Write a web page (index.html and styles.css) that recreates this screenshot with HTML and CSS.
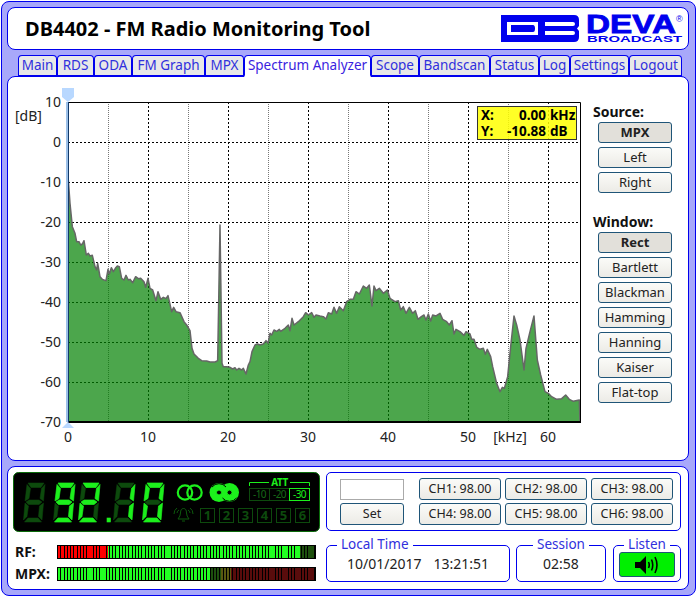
FILE: index.html
```html
<!DOCTYPE html>
<html lang="en">
<head>
    <meta charset="UTF-8">
    <meta name="viewport" content="width=device-width, initial-scale=1.0">
    <title>DB4402 - FM Radio Monitoring Tool</title>
    <link rel="stylesheet" href="styles.css">
</head>
<body>
    <div class="frame">
        <div class="head">
            <h1>DB4402 - FM Radio Monitoring Tool</h1>
            <svg class="logo" width="184" height="41" viewBox="500 8 184 41">
                <path fill="#0000ee" fill-rule="evenodd" d="M501 15H574Q579 15 579 20V26L577 28.5L579 31V37Q579 42 574 42H501ZM507 22V35H538V22ZM511 25H533Q535 25 535 28.5Q535 32 533 32H511ZM545 22V26H573Q575 26 575 24Q575 22 573 22ZM545 31V35H573Q575 35 575 33Q575 31 573 31Z"/>
                <text class="logo-name" x="586" y="33" textLength="90" lengthAdjust="spacingAndGlyphs">DEVA</text>
                <text class="logo-reg" x="676" y="22">®</text>
                <text class="logo-sub" x="587" y="42" textLength="95" lengthAdjust="spacingAndGlyphs">BROADCAST</text>
            </svg>
        </div>

        <div class="tabs">
            <a href="#main">Main</a>
            <a href="#rds">RDS</a>
            <a href="#oda">ODA</a>
            <a href="#graph">FM Graph</a>
            <a href="#mpx">MPX</a>
            <a href="#spectrum" class="active">Spectrum Analyzer</a>
            <a href="#scope">Scope</a>
            <a href="#bandscan">Bandscan</a>
            <a href="#status">Status</a>
            <a href="#log">Log</a>
            <a href="#settings">Settings</a>
            <a href="#logout">Logout</a>
        </div>

        <div class="panel">
            <svg class="chart" width="575" height="360" viewBox="10 88 575 360">
                <path class="grid-minor" d="M108.5 102V422M188.5 102V422M268.5 102V422M348.5 102V422M428.5 102V422M508.5 102V422"/>
                <path class="grid-major" d="M148.5 102V422M228.5 102V422M308.5 102V422M388.5 102V422M468.5 102V422M548.5 102V422M68 142.5H580M68 182.5H580M68 222.5H580M68 262.5H580M68 302.5H580M68 342.5H580M68 382.5H580"/>
                <g transform="translate(40 170) scale(.33333)">
                    <polygon class="trace" points="84,756 85,30 90,100 97,170 105,190 110,215 117,215 122,225 127,222 132,212 139,255 145,250 150,258 157,256 165,290 170,300 173,280 180,320 187,328 198,332 204,298 208,312 214,293 220,305 226,295 232,288 238,290 245,325 252,330 258,316 265,330 270,328 278,338 287,320 295,326 302,325 312,335 317,352 324,325 330,355 338,360 348,392 354,365 362,388 370,382 378,386 384,377 395,425 401,412 408,425 420,428 432,455 440,465 450,482 456,535 462,552 475,565 485,572 500,573 510,576 525,576 533,572 540,165 546,580 550,590 555,590 560,590 570,592 578,597 585,593 590,600 597,595 605,600 610,595 618,612 625,585 630,575 636,545 645,525 652,522 660,525 670,522 678,512 684,520 690,490 695,495 702,480 710,484 718,478 722,484 735,475 745,465 750,482 756,445 762,465 775,455 790,440 797,428 805,435 815,428 822,442 828,435 840,438 850,440 858,447 865,428 875,432 882,412 890,430 898,410 910,422 920,395 930,388 940,388 948,365 958,372 970,348 980,355 988,345 996,408 1002,348 1008,362 1018,355 1030,370 1042,360 1050,385 1065,395 1075,392 1082,420 1090,410 1098,430 1108,412 1118,430 1126,422 1134,448 1144,440 1152,435 1158,450 1165,432 1172,453 1178,435 1188,438 1200,430 1208,448 1220,455 1228,465 1236,452 1242,492 1248,478 1260,485 1272,496 1278,485 1290,492 1295,508 1302,508 1310,532 1320,538 1330,535 1336,553 1342,538 1352,560 1358,590 1370,640 1380,665 1387,652 1393,655 1403,620 1412,530 1422,438 1430,465 1440,510 1452,600 1458,535 1470,485 1482,438 1492,570 1502,615 1515,665 1525,670 1535,680 1550,688 1565,686 1577,675 1588,688 1600,694 1618,690 1620,756"/>
                </g>
                <path class="plot-box" d="M68 102.5H580.5V422"/>
                <path class="plot-floor" d="M68 422H581"/>
                <path class="cursor-band" d="M67 102V422"/>
                <path class="cursor-line" d="M68.5 102V422"/>
                <polygon class="cursor-grip" points="62,88 74,88 74,97 68,102 62,97"/>
                <polygon class="cursor-grip" points="68,422 74,428 62,428"/>

                <g class="y-labels">
                    <text x="61" y="107">10</text>
                    <text x="61" y="147">0</text>
                    <text x="61" y="187">-10</text>
                    <text x="61" y="227">-20</text>
                    <text x="61" y="267">-30</text>
                    <text x="61" y="307">-40</text>
                    <text x="61" y="347">-50</text>
                    <text x="61" y="387">-60</text>
                    <text x="61" y="427">-70</text>
                </g>
                <text class="axis-label" x="15" y="121">[dB]</text>
                <g class="x-labels">
                    <text x="68" y="442">0</text>
                    <text x="148" y="442">10</text>
                    <text x="228" y="442">20</text>
                    <text x="308" y="442">30</text>
                    <text x="388" y="442">40</text>
                    <text x="468" y="442">50</text>
                    <text x="510" y="442">[kHz]</text>
                    <text x="548" y="442">60</text>
                </g>
            </svg>

            <div class="readout">
                <span>X:</span><span class="num">0.00</span><span>kHz</span>
                <span>Y:</span><span class="num">-10.88</span><span>dB</span>
            </div>

            <div class="side">
                <div class="side-title">Source:</div>
                <button class="btn side-btn active">MPX</button>
                <button class="btn side-btn">Left</button>
                <button class="btn side-btn">Right</button>
                <div class="side-title second">Window:</div>
                <button class="btn side-btn active">Rect</button>
                <button class="btn side-btn">Bartlett</button>
                <button class="btn side-btn">Blackman</button>
                <button class="btn side-btn">Hamming</button>
                <button class="btn side-btn">Hanning</button>
                <button class="btn side-btn">Kaiser</button>
                <button class="btn side-btn">Flat-top</button>
            </div>
        </div>

        <div class="status">
            <div class="status-left">
                <svg class="display" width="307" height="60" viewBox="0 0 307 60" role="img" aria-label="92.10 MHz">
                    <defs>
                        <polygon id="sa" points="5,0 21,0 18,4.5 8,4.5"/>
                        <polygon id="sb" points="22,1.5 20.5,18 17,15.5 18.5,5.5"/>
                        <polygon id="sc" points="20.5,20 19,37 15.5,33.5 16.5,23"/>
                        <polygon id="sd" points="1.5,39 5,35 15,35 18.5,39"/>
                        <polygon id="se" points="2,20 5.5,23 4,33.5 .5,37"/>
                        <polygon id="sf" points="4,1.5 7.5,5.5 6,15.5 2,18"/>
                        <polygon id="sg" points="3,19 6,17 16,17 19,19 16,21.5 5.5,21.5"/>
                        <g id="eight">
                            <use href="#sa"/><use href="#sb"/><use href="#sc"/><use href="#sd"/><use href="#se"/><use href="#sf"/><use href="#sg"/>
                        </g>
                    </defs>
                    <rect class="display-bg" x=".5" y=".5" width="306" height="59" rx="5"/>

                    <g class="lcd-dim">
                        <use href="#eight" x="10" y="11"/>
                        <use href="#eight" x="40" y="11"/>
                        <use href="#eight" x="65" y="11"/>
                        <use href="#eight" x="100" y="11"/>
                        <use href="#eight" x="129" y="11"/>
                    </g>
                    <g class="lcd-on">
                        <g transform="translate(40 11)"><use href="#sa"/><use href="#sb"/><use href="#sc"/><use href="#sd"/><use href="#sf"/><use href="#sg"/></g>
                        <g transform="translate(65 11)"><use href="#sa"/><use href="#sb"/><use href="#sd"/><use href="#se"/><use href="#sg"/></g>
                        <rect x="94" y="46" width="3.5" height="4"/>
                        <g transform="translate(100 11)"><use href="#sb"/><use href="#sc"/></g>
                        <g transform="translate(129 11)"><use href="#sa"/><use href="#sb"/><use href="#sc"/><use href="#sd"/><use href="#se"/><use href="#sf"/></g>
                    </g>

                    <g class="ring-on">
                        <circle cx="172" cy="20.5" r="7.2"/>
                        <circle cx="181.5" cy="20.5" r="7.2"/>
                    </g>
                    <g class="swirl">
                        <circle class="swirl-fill" cx="206" cy="20.5" r="9.5"/>
                        <circle class="swirl-fill" cx="216.5" cy="20.5" r="9.5"/>
                        <path class="swirl-cut" d="M199 15A9 9 0 0 1 213 15M223.500 26A9 9 0 0 1 209.500 26"/>
                        <circle class="swirl-eye" cx="206" cy="20.5" r="2.5"/>
                        <circle class="swirl-eye" cx="216.5" cy="20.5" r="2.5"/>
                    </g>

                    <path class="att-line" d="M236.5 14V10.5H256M277 10.5H296.5V14"/>
                    <text class="att-title" x="266.5" y="14">ATT</text>
                    <g class="lcd-box">
                        <rect x="236.5" y="16.5" width="20" height="12"/>
                        <rect x="256.5" y="16.5" width="20" height="12"/>
                    </g>
                    <rect class="att-on" x="276.5" y="16.5" width="20" height="12"/>
                    <text class="att-text" x="246.5" y="26">-10</text>
                    <text class="att-text" x="266.5" y="26">-20</text>
                    <text class="att-text on" x="286.5" y="26">-30</text>

                    <g class="bell">
                        <path d="M165 47Q167.500 44 167.500 41Q167.500 36.500 170.500 36.500Q173.500 36.500 173.500 41Q173.500 44 176 47Z"/>
                        <path d="M169 49H172M164 41Q164 39 166 38M177 41Q177 39 175 38M161 42Q161 38 164 36M180 42Q180 38 177 36"/>
                    </g>
                    <g class="lcd-box">
                        <rect x="187.5" y="36.500" width="14" height="14"/>
                        <rect x="206.5" y="36.500" width="14" height="14"/>
                        <rect x="225.500" y="36.500" width="14" height="14"/>
                        <rect x="244.500" y="36.500" width="14" height="14"/>
                        <rect x="263.500" y="36.500" width="14" height="14"/>
                        <rect x="282.500" y="36.500" width="14" height="14"/>
                    </g>
                    <g class="preset-num">
                        <text x="194.5" y="48">1</text>
                        <text x="213.5" y="48">2</text>
                        <text x="232.5" y="48">3</text>
                        <text x="251.5" y="48">4</text>
                        <text x="270.5" y="48">5</text>
                        <text x="289.5" y="48">6</text>
                    </g>
                </svg>

                <div class="meter-row rf">
                    <span class="meter-label">RF:</span>
                    <div class="meter">
                        <span class="bar red" style="width: 50px"></span>
                        <span class="bar green" style="width: 192px"></span>
                        <span class="bar dim" style="width: 15px"></span>
                    </div>
                </div>
                <div class="meter-row">
                    <span class="meter-label">MPX:</span>
                    <div class="meter">
                        <span class="bar green" style="width: 152px"></span>
                        <span class="bar dim" style="width: 11px"></span>
                        <span class="bar olive" style="width: 10px"></span>
                        <span class="bar dark-red" style="width: 84px"></span>
                    </div>
                </div>
            </div>

            <div class="status-right">
                <div class="tuner">
                    <div class="tuner-set">
                        <input class="freq-input" type="text">
                        <button class="btn">Set</button>
                    </div>
                    <div class="presets">
                        <button class="btn">CH1: 98.00</button>
                        <button class="btn">CH2: 98.00</button>
                        <button class="btn">CH3: 98.00</button>
                        <button class="btn">CH4: 98.00</button>
                        <button class="btn">CH5: 98.00</button>
                        <button class="btn">CH6: 98.00</button>
                    </div>
                </div>
                <div class="info-row">
                    <fieldset class="local-time">
                        <legend>Local Time</legend>
                        <span>10/01/2017</span><span>13:21:51</span>
                    </fieldset>
                    <fieldset class="session">
                        <legend>Session</legend>
                        02:58
                    </fieldset>
                    <fieldset class="listen">
                        <legend>Listen</legend>
                        <button class="listen-btn" aria-label="Listen">
                            <svg width="24" height="18" viewBox="0 0 24 18">
                                <polygon class="spk-cone" points="0,6 5,6 11,0 11,18 5,12 0,12"/>
                                <path class="spk-wave" d="M13.500 6Q15 9 13.500 12M16.500 3.500Q19 9 16.500 14.500M20 1Q24 9 20 17"/>
                            </svg>
                        </button>
                    </fieldset>
                </div>
            </div>
        </div>
    </div>
</body>
</html>
```

FILE: styles.css
```css
body {
    margin: 0;
    background-color: #fff;
    font-family: "Noto Sans", Tahoma, sans-serif;
    font-size: 14px;
    color: #222;
}

.frame {
    width: 695px;
    height: 595px;
    margin: 1px 0 0 1px;
    padding: 5px 6px 5px 5px;
    box-sizing: border-box;
    background-color: #a8a8fa;
    border: 1px solid #0000ee;
    border-radius: 8px;
}

.head {
    height: 43px;
    box-sizing: border-box;
    display: flex;
    align-items: center;
    justify-content: space-between;
    padding: 0 4px 0 17px;
    background-color: #fff;
    border: 1px solid #0000ee;
    border-radius: 8px;
}

h1 {
    margin: 0;
    font-size: 20px;
    font-weight: bold;
    color: #000;
}

.logo {
    display: block;
}

.logo-name {
    font-family: "Liberation Sans", Arial, sans-serif;
    font-size: 25px;
    font-weight: bold;
    fill: #0000ee;
    stroke: #0000ee;
    stroke-width: .8px;
}

.logo-sub {
    font-family: "Liberation Sans", Arial, sans-serif;
    font-size: 9.5px;
    font-weight: bold;
    fill: #0000ee;
}

.logo-reg {
    font-family: "Liberation Sans", Arial, sans-serif;
    font-size: 9px;
    fill: #0000ee;
}

.tabs {
    display: grid;
    grid-template-columns: 39px 37px 38px 73px 39px 127px 48px 71px 49px 31px 59px 53px;
    height: 22px;
    margin: 5px 0 -1px 11px;
    position: relative;
    z-index: 1;
}

.tabs a {
    box-sizing: border-box;
    background-color: #e8e8e8;
    border: 1px solid #0000ee;
    border-bottom-width: 2px;
    border-radius: 4px 4px 0 0;
    text-align: center;
    text-decoration: none;
    font-size: 13.5px;
    line-height: 18px;
    color: #3030dd;
}

.tabs a.active {
    background-color: #fff;
    border-bottom-color: #fff;
    color: #3a1ee0;
}

.panel {
    height: 385px;
    box-sizing: border-box;
    display: flex;
    position: relative;
    background-color: #fff;
    border: 1px solid #0000ee;
    border-radius: 8px;
}

.chart {
    margin: 11px 0 0 2px;
    flex: none;
}

.chart text {
    font-family: "Noto Sans", Tahoma, sans-serif;
    font-size: 14px;
    fill: #222;
}

.grid-minor {
    stroke: #777;
    stroke-dasharray: 1 1;
    fill: none;
}

.grid-major {
    stroke: #000;
    stroke-dasharray: 2 2;
    fill: none;
}

.trace {
    fill: rgba(0, 128, 0, .7);
    stroke: #666;
    stroke-width: 4.5px;
    stroke-linejoin: round;
}

.plot-box {
    stroke: #000;
    fill: none;
}

.plot-floor {
    stroke: #000;
    stroke-width: 2px;
}

.cursor-band {
    stroke: #9cc0e8;
    stroke-width: 2px;
}

.cursor-line {
    stroke: #123a6a;
}

.cursor-grip {
    fill: #b8d8ff;
}

.y-labels text {
    text-anchor: end;
}

.x-labels text {
    text-anchor: middle;
}

.readout {
    position: absolute;
    left: 469px;
    top: 29px;
    width: 100px;
    height: 34px;
    box-sizing: border-box;
    display: grid;
    grid-template-columns: 16px 45px auto;
    column-gap: 4px;
    align-content: center;
    padding-left: 3px;
    background-color: rgba(255, 255, 0, .85);
    border: 1px solid #333;
    font-size: 13.5px;
    font-weight: bold;
    line-height: 16px;
    color: #000;
}

.readout .num {
    text-align: right;
}

.side {
    display: flex;
    flex-direction: column;
    gap: 4px;
    margin: 27px 0 0 8px;
}

.side-title {
    height: 14px;
    line-height: 16px;
    font-weight: bold;
    color: #111;
}

.side-title.second {
    margin-top: 17px;
}

.btn {
    padding: 0 0 2px;
    font-family: "Noto Sans", Tahoma, sans-serif;
    font-size: 12.5px;
    color: #222;
    background: linear-gradient(#fbfbf8, #ecebe6);
    border: 1px solid #1f5578;
    border-radius: 3px;
    cursor: pointer;
}

.side-btn {
    width: 74px;
    height: 21px;
    margin-left: 5px;
    font-size: 13px;
    line-height: 16px;
}

.side-btn.active {
    background: #e2e0da;
    font-weight: bold;
}

.status {
    height: 124px;
    box-sizing: border-box;
    margin-top: 5px;
    padding: 5px;
    display: flex;
    gap: 6px;
    background-color: #fff;
    border: 1px solid #0000ee;
    border-radius: 8px;
}

.status-left {
    width: 307px;
}

.display {
    display: block;
}

.display-bg {
    fill: #000;
    stroke: #0a6b0a;
}

.lcd-dim {
    fill: #0d4a0d;
    stroke: #0d4a0d;
    stroke-width: .5px;
}

.lcd-on {
    fill: #1cf01c;
    stroke: #1cf01c;
    stroke-width: .6px;
}

.ring-on circle {
    fill: none;
    stroke: #1cf01c;
    stroke-width: 2.2px;
}

.swirl-fill {
    fill: #1cf01c;
}

.swirl-cut {
    fill: none;
    stroke: #000;
    stroke-width: 1px;
}

.swirl-eye {
    fill: #000;
    stroke: #1cf01c;
    stroke-width: 1px;
}

.att-line {
    fill: none;
    stroke: #1cf01c;
}

.display .att-title {
    font-family: "Noto Sans", Tahoma, sans-serif;
    font-size: 10px;
    font-weight: bold;
    letter-spacing: -.5px;
    text-anchor: middle;
    fill: #1cf01c;
}

.lcd-box rect {
    fill: none;
    stroke: #0d4a0d;
}

.att-on {
    fill: none;
    stroke: #1cf01c;
}

.display .att-text {
    font-family: "Noto Sans", Tahoma, sans-serif;
    font-size: 10px;
    letter-spacing: -.5px;
    text-anchor: middle;
    fill: #176a17;
}

.display .att-text.on {
    fill: #1cf01c;
}

.bell path {
    fill: none;
    stroke: #0d5a0d;
}

.preset-num text {
    font-family: "Noto Sans", Tahoma, sans-serif;
    font-size: 13px;
    font-weight: bold;
    text-anchor: middle;
    fill: #0d4a0d;
}

.meter-row {
    display: flex;
    align-items: center;
    height: 14px;
    margin-top: 8px;
}

.meter-row.rf {
    margin-top: 13px;
}

.meter-label {
    width: 44px;
    margin-top: -2px;
    padding-left: 2px;
    box-sizing: border-box;
    font-weight: bold;
    color: #111;
}

.meter {
    display: flex;
    position: relative;
    width: 259px;
    height: 14px;
    box-sizing: border-box;
    border: 1px solid #000;
    background-color: #000;
}

.meter::after {
    content: "";
    position: absolute;
    inset: 0;
    background: repeating-linear-gradient(90deg, transparent 0 2.25px, #000 2.25px 3.25px);
}

.bar {
    display: block;
    height: 100%;
}

.bar.red {
    background-color: #ff0000;
}

.bar.green {
    background-color: #22ff22;
}

.bar.dim {
    background-color: #1d4f0d;
}

.bar.olive {
    background-color: #5a5a10;
}

.bar.dark-red {
    background-color: #5a0c0c;
}

.status-right {
    width: 355px;
}

.tuner {
    height: 59px;
    box-sizing: border-box;
    display: flex;
    padding: 5px 0 0 13px;
    border: 1px solid #0000ee;
    border-radius: 5px;
}

.tuner-set {
    width: 64px;
    margin: 1px 15px 0 0;
    display: flex;
    flex-direction: column;
    gap: 3px;
}

.freq-input {
    height: 21px;
    padding: 0;
    box-sizing: border-box;
    border: 1px solid #aaa;
    background-color: #fff;
}

.tuner-set .btn {
    height: 22px;
}

.presets {
    display: grid;
    grid-template-columns: repeat(3, 82px);
    grid-auto-rows: 22px;
    column-gap: 4px;
    row-gap: 3px;
}

.info-row {
    display: flex;
    gap: 6px;
    margin-top: 5px;
}

fieldset {
    margin: 0;
    padding: 0 0 8px;
    box-sizing: border-box;
    height: 46px;
    min-width: 0;
    border: 1px solid #0000ee;
    border-radius: 5px;
    text-align: center;
}

legend {
    padding: 0 4px 2px;
    margin: 0 auto;
    font-size: 13.5px;
    line-height: 16px;
    color: #3030dd;
}

.local-time {
    width: 184px;
    display: flex;
    justify-content: center;
    gap: 12px;
}

.local-time legend {
    margin: 0 0 0 10px;
    text-align: left;
}

.session {
    width: 90px;
}

.listen {
    width: 68px;
    margin-left: 1px;
}

.listen-btn {
    width: 56px;
    height: 25px;
    margin-top: -2px;
    padding: 0;
    background-color: #00f000;
    border: 1px solid #1f5578;
    border-radius: 3px;
    cursor: pointer;
}

.listen-btn svg {
    display: block;
    margin: auto;
}

.spk-cone {
    fill: #000;
}

.spk-wave {
    fill: none;
    stroke: #000;
    stroke-width: 1.6px;
}
```
